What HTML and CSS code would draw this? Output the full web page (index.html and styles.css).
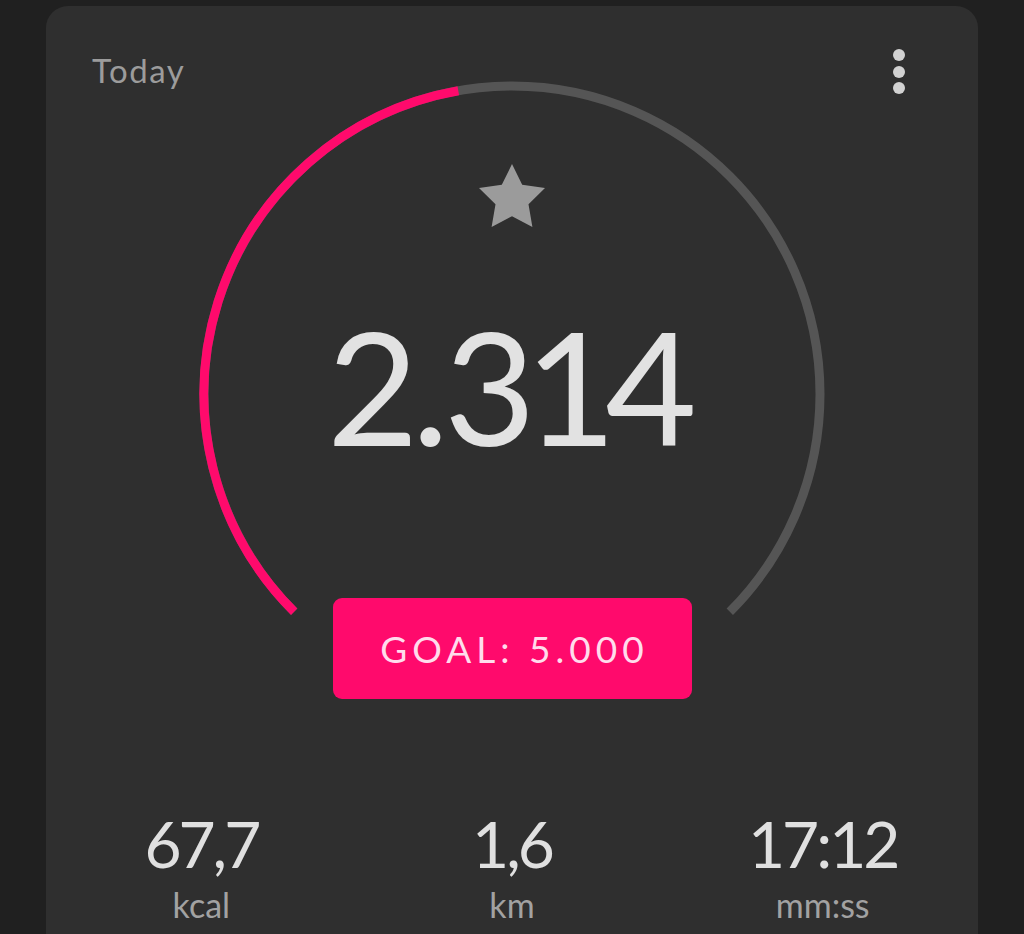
FILE: index.html
```html
<!DOCTYPE html>
<html>
<head>
<meta charset="utf-8">
<link rel="stylesheet" href="styles.css">
</head>
<body>
<div class="card">
  <div class="header">
    <span class="title">Today</span>
    <div class="menu"><i></i><i></i><i></i></div>
  </div>
  <div class="gauge">
    <svg class="ring" width="640" height="640" viewBox="0 0 640 640">
      <path d="M102.2 537.8 A308 308 0 1 1 537.8 537.8" fill="none" stroke="#555555" stroke-width="9"/>
      <path d="M102.2 537.8 A308 308 0 0 1 266.3 16.7" fill="none" stroke="#ff0a6c" stroke-width="9"/>
    </svg>
    <div class="gauge-content">
      <svg class="star" width="66" height="63" viewBox="2 2 20 19.02"><polygon points="12,2 15.09,8.26 22,9.27 17,14.14 18.18,21.02 12,17.77 5.82,21.02 7,14.14 2,9.27 8.91,8.26" fill="#9b9b9b"/></svg>
      <div class="steps">2<span class="dot">.</span>314</div>
      <div class="goal">GOAL: 5.000</div>
    </div>
  </div>
  <div class="stats">
    <div class="stat"><div class="value">67,7</div><div class="unit">kcal</div></div>
    <div class="stat"><div class="value">1,6</div><div class="unit">km</div></div>
    <div class="stat"><div class="value">17:12</div><div class="unit">mm:ss</div></div>
  </div>
</div>
</body>
</html>
```
FILE: styles.css
```css
html, body {
  margin: 0;
  padding: 0;
  background: #202020;
  height: 934px;
  overflow: hidden;
}
body {
  font-family: Lato, "Open Sans", sans-serif;
}
.card {
  margin: 6px 46px 0;
  background: #2f2f2f;
  border-radius: 22px;
  height: 1000px;
}
.header {
  display: flex;
  justify-content: space-between;
  align-items: flex-start;
  padding: 46px 73px 0 46px;
  height: 22px;
}
.title {
  font-size: 33px;
  line-height: 36px;
  color: #9c9c9c;
  letter-spacing: 1.5px;
}
.menu {
  display: flex;
  flex-direction: column;
  gap: 4.5px;
  margin-top: -3px;
}
.menu i {
  display: block;
  width: 12px;
  height: 12px;
  border-radius: 50%;
  background: #d2d2d2;
}
.gauge {
  display: grid;
  width: 640px;
  margin: 0 auto;
}
.gauge > * {
  grid-area: 1 / 1;
}
.ring {
  display: block;
}
.gauge-content {
  display: flex;
  flex-direction: column;
  align-items: center;
  padding-top: 90px;
}
.star {
  display: block;
}
.steps {
  margin-top: 79px;
  font-size: 158px;
  line-height: 1;
  color: #e2e2e2;
  letter-spacing: -11px;
  padding-right: 11px;
}
.steps .dot {
  margin: 0 6px 0 4px;
}
.goal {
  margin-top: 134px;
  width: 359px;
  height: 101px;
  border-radius: 9px;
  background: #ff0a6c;
  color: #ffdcec;
  font-size: 37px;
  letter-spacing: 5px;
  padding-left: 5px;
  box-sizing: border-box;
  display: flex;
  align-items: center;
  justify-content: center;
}
.stats {
  display: grid;
  grid-template-columns: 1fr 1fr 1fr;
  margin-top: 98px;
  text-align: center;
}
.value {
  font-size: 64px;
  line-height: 1;
  color: #e0e0e0;
  letter-spacing: -3px;
}
.unit {
  font-size: 34px;
  line-height: 1;
  margin-top: 12px;
  color: #a2a2a2;
}
```
